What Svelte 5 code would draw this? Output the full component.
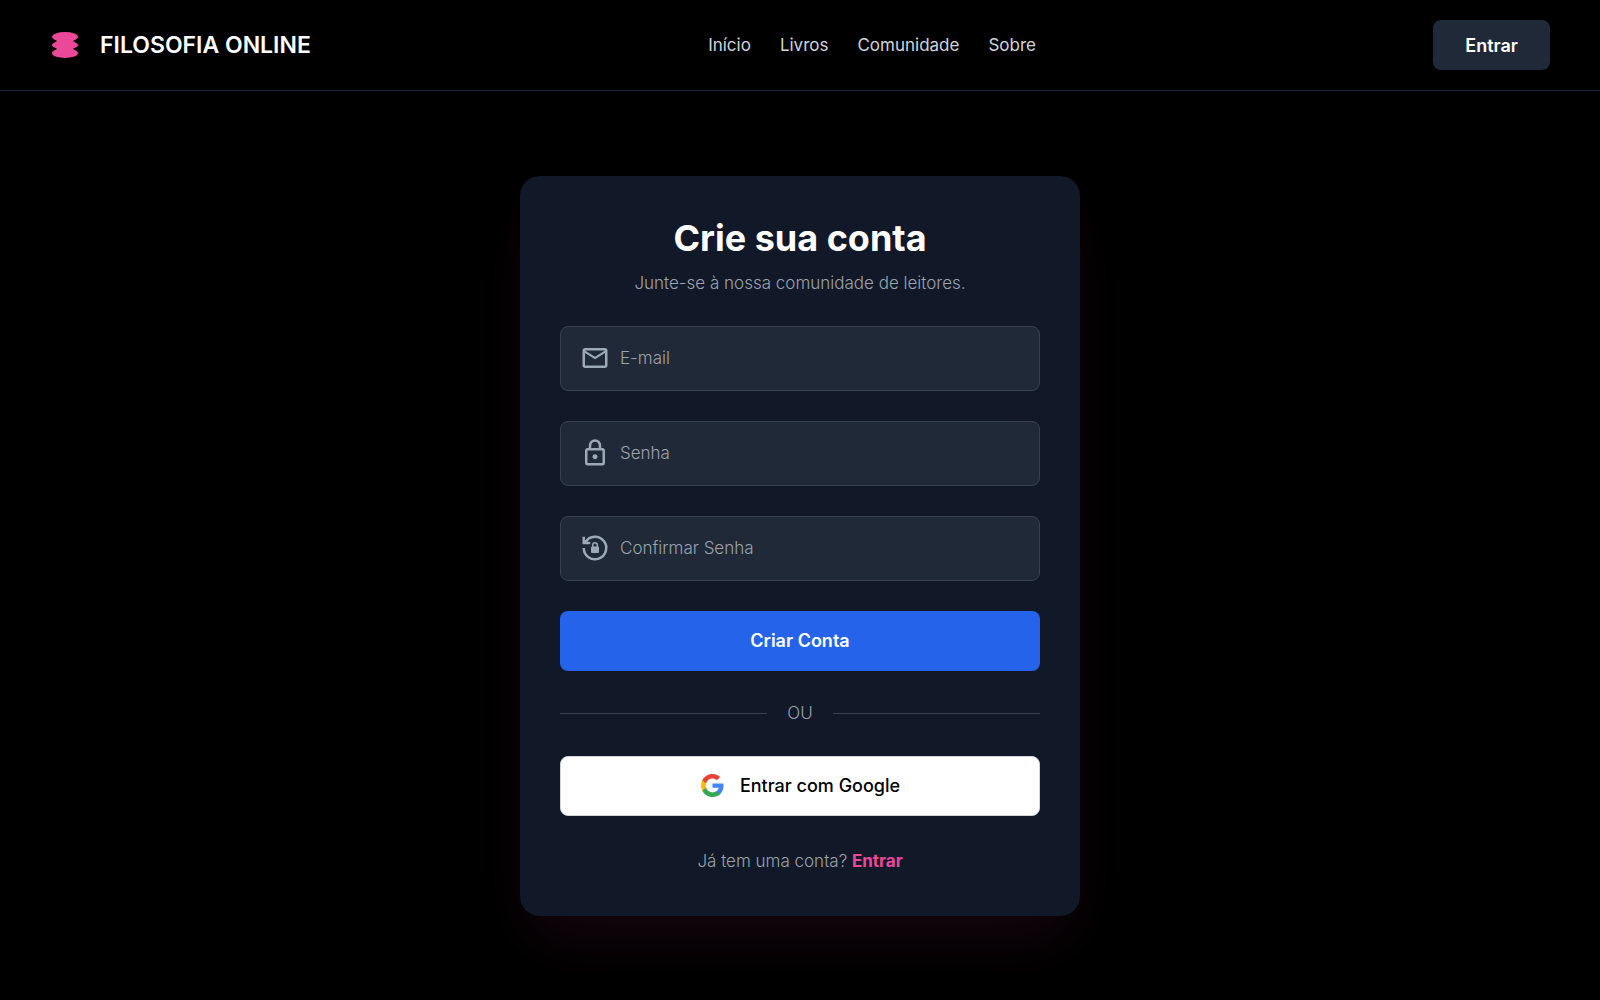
<script>
  const links = ['Início', 'Livros', 'Comunidade', 'Sobre'];
</script>

<div class="page">
  <header>
    <div class="brand">
      <svg class="logo" viewBox="0 0 30 30" aria-hidden="true">
        <ellipse cx="15" cy="6.8" rx="13" ry="4.8" />
        <ellipse cx="15" cy="15" rx="13" ry="4.4" />
        <ellipse cx="15" cy="23.2" rx="13" ry="4.8" />
        <path d="M6.5 8h17v14h-17z" />
      </svg>
      <span class="name">FILOSOFIA ONLINE</span>
    </div>
    <nav>
      {#each links as link}
        <a href="#{link.toLowerCase()}">{link}</a>
      {/each}
    </nav>
    <button class="login" type="button">Entrar</button>
  </header>

  <main>
    <section class="card">
      <div class="intro">
        <h1>Crie sua conta</h1>
        <p>Junte-se à nossa comunidade de leitores.</p>
      </div>

      <form onsubmit={(e) => e.preventDefault()}>
        <label class="field">
          <svg viewBox="0 0 24 24" aria-hidden="true">
            <path fill="currentColor" d="M4 20q-.825 0-1.412-.587T2 18V6q0-.825.588-1.412T4 4h16q.825 0 1.413.588T22 6v12q0 .825-.587 1.413T20 20zm8-7L4 8v10h16V8zm0-2l8-5H4zM4 8V6v12z" />
          </svg>
          <input type="email" placeholder="E-mail" aria-label="E-mail" />
        </label>
        <label class="field">
          <svg viewBox="0 0 24 24" aria-hidden="true">
            <path fill="currentColor" d="M6 22q-.825 0-1.412-.587T4 20V10q0-.825.588-1.412T6 8h1V6q0-2.075 1.463-3.537T12 1t3.538 1.463T17 6v2h1q.825 0 1.413.588T20 10v10q0 .825-.587 1.413T18 22zm0-2h12V10H6zm6-3q.825 0 1.413-.587T14 15t-.587-1.412T12 13t-1.412.588T10 15t.588 1.413T12 17M9 8h6V6q0-1.25-.875-2.125T12 3t-2.125.875T9 6z" />
          </svg>
          <input type="password" placeholder="Senha" aria-label="Senha" />
        </label>
        <label class="field">
          <svg viewBox="0 0 24 24" aria-hidden="true">
            <path fill="none" stroke="currentColor" stroke-width="2" d="M3 12A9 9 0 1 0 4.4 7.2M3 3V8H8.2" />
            <path fill="currentColor" fill-rule="evenodd" d="M9.6 16q-.8 0-.8-.8v-3.6q0-.8.8-.8V9.6a2.4 2.4 0 0 1 4.8 0v1.2q.8 0 .8.8v3.6q0 .8-.8.8zM10.8 10.8h2.4V9.6a1.2 1.2 0 0 0-2.4 0z" />
          </svg>
          <input type="password" placeholder="Confirmar Senha" aria-label="Confirmar Senha" />
        </label>
        <button class="wide primary" type="submit">Criar Conta</button>
      </form>

      <div class="divider"><span>OU</span></div>

      <button class="wide google" type="button">
        <svg viewBox="0 0 24 24" aria-hidden="true">
          <path fill="#4285f4" d="M22.56 12.25c0-.78-.07-1.53-.2-2.25H12v4.26h5.92c-.26 1.37-1.04 2.53-2.21 3.31v2.77h3.57c2.08-1.92 3.28-4.74 3.28-8.09z" />
          <path fill="#34a853" d="M12 23c2.97 0 5.46-.98 7.28-2.66l-3.57-2.77c-.98.66-2.23 1.06-3.71 1.06-2.86 0-5.29-1.93-6.16-4.53H2.18v2.84C3.99 20.53 7.7 23 12 23z" />
          <path fill="#fbbc05" d="M5.84 14.09c-.22-.66-.35-1.36-.35-2.09s.13-1.43.35-2.09V7.07H2.18C1.43 8.55 1 10.22 1 12s.43 3.45 1.18 4.93l3.66-2.84z" />
          <path fill="#ea4335" d="M12 5.38c1.62 0 3.06.56 4.21 1.64l3.15-3.15C17.45 2.09 14.97 1 12 1 7.7 1 3.99 3.47 2.18 7.07l3.66 2.84c.87-2.6 3.3-4.53 6.16-4.53z" />
        </svg>
        <span>Entrar com Google</span>
      </button>

      <p class="signin">Já tem uma conta? <a href="#entrar">Entrar</a></p>
    </section>
  </main>
</div>

<style>
  :global(body) {
    margin: 0;
    background: #000;
  }
  .page {
    min-height: 100vh;
    display: flex;
    flex-direction: column;
    background: #000;
    color: #fff;
    font-family: Inter, 'Liberation Sans', sans-serif;
    font-size: 17px;
    line-height: 25px;
  }
  header {
    display: flex;
    justify-content: space-between;
    align-items: center;
    padding: 20px 50px;
    border-bottom: 1px solid #1f2937;
  }
  .brand {
    display: flex;
    align-items: center;
    gap: 20px;
  }
  .logo {
    width: 30px;
    height: 30px;
    fill: #ec4899;
  }
  .name {
    font-size: 23px;
    font-weight: 600;
    line-height: 30px;
  }
  nav {
    display: flex;
    gap: 29px;
  }
  nav a {
    color: #d1d5db;
    text-decoration: none;
  }
  button {
    border: 0;
    border-radius: 8px;
    font: inherit;
    font-size: 18px;
    font-weight: 600;
    cursor: pointer;
  }
  .login {
    height: 50px;
    padding: 0 32px;
    background: #1f2937;
    color: #fff;
  }
  main {
    flex: 1;
    display: flex;
    align-items: center;
    justify-content: center;
    padding: 40px 20px;
  }
  .card {
    box-sizing: border-box;
    width: 100%;
    max-width: 560px;
    padding: 40px;
    display: flex;
    flex-direction: column;
    gap: 30px;
    border-radius: 20px;
    background: #111827;
    box-shadow: 0 31px 62px -15px rgba(236, 72, 153, 0.1);
  }
  .intro {
    display: flex;
    flex-direction: column;
    gap: 10px;
    text-align: center;
  }
  h1,
  p {
    margin: 0;
  }
  h1 {
    font-size: 36px;
    font-weight: 700;
    line-height: 45px;
  }
  .intro p,
  .signin {
    color: #9ca3af;
    font-weight: 300;
  }
  form {
    display: flex;
    flex-direction: column;
    gap: 30px;
  }
  .field {
    box-sizing: border-box;
    height: 65px;
    padding: 0 19px;
    display: flex;
    align-items: center;
    gap: 10px;
    border: 1px solid #374151;
    border-radius: 8px;
    background: #1f2937;
    color: #9ca9b8;
  }
  .field svg {
    width: 30px;
    height: 30px;
    flex: none;
  }
  input {
    flex: 1;
    min-width: 0;
    padding: 0;
    border: 0;
    outline: 0;
    background: none;
    color: #fff;
    font: inherit;
    font-weight: 300;
  }
  input::placeholder {
    color: #9ca3af;
    opacity: 1;
  }
  .wide {
    height: 60px;
    display: flex;
    align-items: center;
    justify-content: center;
    gap: 15px;
  }
  .primary {
    background: #2563eb;
    color: #fff;
  }
  .divider {
    display: flex;
    align-items: center;
    gap: 20px;
    color: #9ca3af;
    font-weight: 300;
  }
  .divider::before,
  .divider::after {
    content: '';
    flex: 1;
    border-top: 1px solid #374151;
  }
  .google {
    border: 1px solid #d1d5db;
    background: #fff;
    color: #000;
    font-weight: 500;
  }
  .google svg {
    width: 25px;
    height: 25px;
  }
  .signin {
    line-height: 30px;
    text-align: center;
  }
  .signin a {
    color: #ec4899;
    font-weight: 700;
    text-decoration: none;
  }
</style>
